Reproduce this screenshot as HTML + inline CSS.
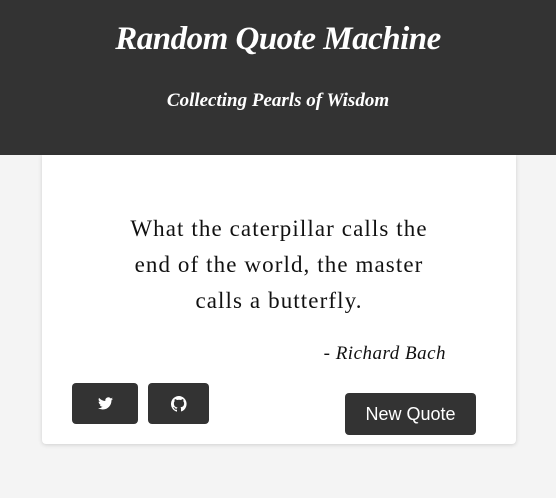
<!DOCTYPE html>
<html><head><style>
body{margin:0;width:556px;height:498px;background:#f4f4f4;font-family:"Liberation Serif",serif;position:relative;overflow:hidden}
header{height:155px;background:#333;color:#fff;text-align:center}
h1{margin:0;position:absolute;top:21px;width:100%;font-size:33px;font-style:italic;font-weight:bold;letter-spacing:-0.5px}
h2{margin:0;position:absolute;top:90px;width:100%;font-size:19px;font-style:italic;font-weight:bold}
.card{position:absolute;left:42px;top:155px;width:474px;height:289px;background:#fff;border-radius:0 0 4px 4px;box-shadow:0 1px 4px rgba(0,0,0,.15)}
.q{position:absolute;left:0;width:100%;top:56px;text-align:center;font-size:23px;line-height:36px;color:#111;letter-spacing:1.1px;white-space:nowrap}
.a{position:absolute;right:70px;top:188px;font-size:19px;font-style:italic;color:#111;letter-spacing:0.5px}
.b{position:absolute;background:#333;border-radius:4px;color:#fff;display:flex;align-items:center;justify-content:center}
</style></head><body>
<header><h1>Random Quote Machine</h1><h2>Collecting Pearls of Wisdom</h2></header>
<div class="card">
<div class="q">What the caterpillar calls the<br>end of the world, the master<br>calls a butterfly.</div>
<div class="a">- Richard Bach</div>
<div class="b" style="left:30px;top:228px;width:66px;height:41px"><svg width="15" height="13" viewBox="0 0 24 20"><path fill="#fff" d="M24 2.4a10 10 0 0 1-2.8.8A5 5 0 0 0 23.3.5a10 10 0 0 1-3.1 1.2A4.9 4.9 0 0 0 11.8 6 14 14 0 0 1 1.7.9a4.9 4.9 0 0 0 1.5 6.6A4.9 4.9 0 0 1 1 6.9a4.9 4.9 0 0 0 3.9 4.8 5 5 0 0 1-2.2.1 4.9 4.9 0 0 0 4.6 3.4A9.9 9.9 0 0 1 0 17.3 14 14 0 0 0 7.5 19.5c9 0 14-7.5 14-14v-.6A10 10 0 0 0 24 2.4z"/></svg></div>
<div class="b" style="left:106px;top:228px;width:61px;height:41px"><svg width="16" height="16" viewBox="0 0 16 16"><path fill="#fff" d="M8 0a8 8 0 0 0-2.5 15.6c.4 0 .5-.2.5-.4v-1.5c-2.2.5-2.7-1-2.7-1-.4-.9-.9-1.2-.9-1.2-.7-.5.1-.5.1-.5.8.1 1.2.8 1.2.8.7 1.3 1.9.9 2.3.7.1-.5.3-.9.5-1.1-1.8-.2-3.6-.9-3.6-4 0-.9.3-1.6.8-2.1-.1-.2-.4-1 .1-2.1 0 0 .7-.2 2.2.8a7.6 7.6 0 0 1 4 0c1.5-1 2.2-.8 2.2-.8.4 1.1.2 1.9.1 2.1.5.6.8 1.3.8 2.1 0 3.1-1.9 3.7-3.6 3.9.3.3.5.8.5 1.5v2.2c0 .2.1.5.6.4A8 8 0 0 0 8 0z"/></svg></div>
<div class="b" style="left:303px;top:238px;width:131px;height:42px;font-family:'Liberation Sans',sans-serif;font-size:18px">New Quote</div>
</div>
</body></html>
